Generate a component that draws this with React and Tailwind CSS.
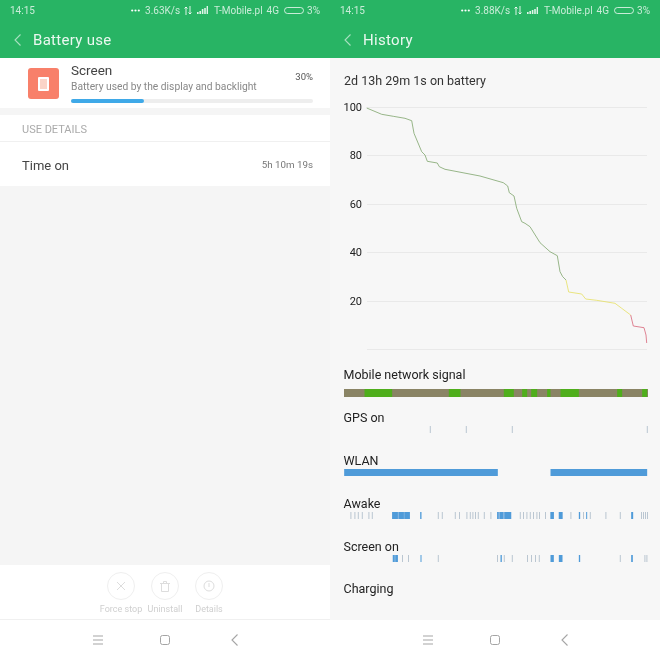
import React from "react";

const curveGreen = "366.7,108 381.7,114.3 393.3,116.3 405,118.3 411.7,120.7 414,133.3 421.7,151.7 425,155 427.3,161.3 437.3,163 439.3,166.7 445,169.3 480,176 503.3,182.7 507.7,186 509.3,192.7 514,196 516.7,208.3 521.7,221.7 525,223.3 530,226.7 540,242.7 550,251.7 557.3,255.7 560,271.7 562.7,276.7 566,280";
const curveYellow = "566,280 568.7,292 581.7,294 585.7,299 596.7,300.3 615,303.3 621.7,308.3 630.7,315";
const curveRed = "630.7,315 633.3,326 644,327.7 646,335 646.7,343";

// x values below are read off the 3x crops, 0-960 across x=340..660
const signalGreen = [[72, 155], [325, 360], [490, 520], [545, 560], [572, 590], [620, 630], [660, 715], [830, 845], [905, 920]];
const gps = [268, 376, 514, 919];
const wlan = [[11, 472], [630, 920]];
const awakeFaint = [30, 42, 52, 64, 84, 94, 292, 304, 343, 356, 378, 388, 396, 404, 412, 430, 450, 538, 548, 558, 568, 578, 588, 596, 614, 690, 728, 748, 795, 838, 902, 908, 914, 920];
const awakeWash = [[155, 208], [470, 512], [630, 640], [655, 666]];
const awakeSolid = [[155, 172], [175, 190], [192, 208], [239, 243], [470, 474], [478, 488], [492, 512], [630, 640], [655, 666], [715, 719], [737, 740], [872, 878]];
const screenFaint = [185, 203, 292, 470, 490, 514, 560, 572, 584, 595, 838, 912, 918];
const screenWash = [[157, 172]];
const screenSolid = [[157, 162], [165, 172], [240, 243], [480, 484], [630, 640], [655, 666], [715, 719], [872, 877]];

function Chevron({ className }) {
  return (
    <svg width="7" height="12" viewBox="0 0 7 12" fill="none" className={className}>
      <path d="M6.500 0.500 L1 6 L6.500 11.500" stroke="currentColor" strokeWidth="1.100" />
    </svg>
  );
}

function StatusBar({ speed, bars }) {
  return (
    <div className="h-5 flex items-center justify-between pl-[10px] pr-[10px] text-[10px] text-white/75">
      <span>14:15</span>
      <div className="flex items-center">
        <svg width="9" height="3" viewBox="0 0 9 3" className="mr-[5px]">
          <circle cx="1.2" cy="1.5" r="1.1" fill="#fff" />
          <circle cx="4.5" cy="1.5" r="1.1" fill="#fff" />
          <circle cx="7.8" cy="1.5" r="1.1" fill="#fff" />
        </svg>
        <span className="mr-[4px]">{speed}</span>
        <svg width="8" height="9" viewBox="0 0 8 9" fill="none" stroke="#fff" strokeOpacity="0.85" className="mr-[5px]">
          <path d="M2 9V1M0.5 2.5 2 1 3.500 2.500M6 0V8M4.500 6.500 6 8 7.500 6.500" />
        </svg>
        <svg width="11" height="8" viewBox="0 0 11 8" className="mr-[6px]">
          {bars.map((h, i) => (
            <rect key={i} x={i * 2.4} y={8 - h} width="1.6" height={h} fill="#fff" fillOpacity="0.85" />
          ))}
        </svg>
        <span className="mr-[4px]">T-Mobile.pl</span>
        <span className="mr-[5px]">4G</span>
        <div className="w-[20px] h-[7px] rounded-full border border-white/75 mr-[3px]" />
        <span>3%</span>
      </div>
    </div>
  );
}

function Header({ title, speed, bars }) {
  return (
    <div className="h-[58px] bg-[#28b464] text-white shrink-0">
      <StatusBar speed={speed} bars={bars} />
      <div className="h-[38px] flex items-center pl-[14px] pt-[1px]">
        <Chevron className="text-white/60 mr-[12px]" />
        <span className="text-[15px] tracking-[0.3px] text-white/90 mt-[1px]">{title}</span>
      </div>
    </div>
  );
}

function NavBar() {
  return (
    <div className="h-[40px] bg-white flex items-center justify-between pl-[93px] pr-[92px] shrink-0 text-[#a5a5a5]">
      <svg width="10" height="10" viewBox="0 0 10 10" stroke="currentColor" strokeWidth="1">
        <path d="M0 1H10M0 5H10M0 9H10" />
      </svg>
      <div className="w-[10px] h-[10px] -ml-[4px] rounded-[2.500px] border border-current" />
      <Chevron className="" />
    </div>
  );
}

function ActionButton({ label, children }) {
  return (
    <div className="flex flex-col items-center w-[44px]">
      <div className="w-[28px] h-[28px] rounded-full border border-[#efefef] flex items-center justify-center">
        {children}
      </div>
      <span className="text-[9px] leading-[12px] mt-[3px] text-[#cfcfcf] whitespace-nowrap">{label}</span>
    </div>
  );
}

function BatteryUse() {
  return (
    <div className="w-[330px] h-[660px] flex flex-col bg-[#f5f5f5]">
      <Header title="Battery use" speed="3.63K/s" bars={[2, 3, 5, 6, 8]} />
      <div className="h-[50px] bg-white flex pl-[28px] pr-[17px] pt-[10px] shrink-0">
        <div className="w-[31px] h-[31px] rounded-[3px] bg-[#f8806a] flex items-center justify-center shrink-0">
          <div className="w-[11px] h-[14px] rounded-[1px] border-2 border-white bg-[#fbd4c8]" />
        </div>
        <div className="ml-[12px] flex-1 -mt-[6px]">
          <div className="flex justify-between">
            <div>
              <div className="text-[13.500px] leading-[16px] text-[#444]">Screen</div>
              <div className="text-[10.250px] leading-[14px] mt-[2px] text-[#888]">Battery used by the display and backlight</div>
            </div>
            <span className="text-[9.500px] text-[#555] mt-[9px] leading-[12px]">30%</span>
          </div>
          <div className="h-[3.500px] mt-[5px] rounded-full bg-[#eeeeee]">
            <div className="w-[30%] h-full rounded-full bg-[#3fa9e8]" />
          </div>
        </div>
      </div>
      <div className="mt-[7px] h-[71px] bg-white shrink-0">
        <div className="h-[27px] pl-[22px] pt-[7px] text-[11px] leading-[16px] text-[#aaaaaa] border-b border-[#f0f0f0]">USE DETAILS</div>
        <div className="h-[44px] pl-[22px] pr-[17px] pt-[3px] flex items-center justify-between">
          <span className="text-[13px] text-[#444]">Time on</span>
          <span className="text-[9.750px] text-[#777]">5h 10m 19s</span>
        </div>
      </div>
      <div className="flex-1" />
      <div className="h-[55px] bg-white border-b border-[#f0f0f0] flex justify-center gap-0 pt-[7px] shrink-0">
        <ActionButton label="Force stop">
          <svg width="10" height="10" viewBox="0 0 10 10" stroke="#dddddd" strokeWidth="1">
            <path d="M1 1L9 9M9 1L1 9" />
          </svg>
        </ActionButton>
        <ActionButton label="Uninstall">
          <svg width="10" height="11" viewBox="0 0 10 11" fill="none" stroke="#dddddd" strokeWidth="1">
            <path d="M0 2.500H10M1.500 2.500V10.500H8.500V2.500M3.500 2.500V0.500H6.500V2.500" />
          </svg>
        </ActionButton>
        <ActionButton label="Details">
          <svg width="12" height="12" viewBox="0 0 12 12" fill="none" stroke="#dddddd" strokeWidth="1">
            <circle cx="6" cy="6" r="5" />
            <path d="M6 3V7" />
          </svg>
        </ActionButton>
      </div>
      <NavBar />
    </div>
  );
}

function Ticks({ faint = [], wash = [], solid = [], height = 7 }) {
  return (
    <svg width="304" height={height} viewBox={`10.500 0 912 ${height}`} preserveAspectRatio="none" className="block">
      {faint.map((x) => (
        <rect key={x} x={x} y="0" width="2.500" height={height} fill="#aebcc9" />
      ))}
      {wash.map(([a, b]) => (
        <rect key={a} x={a} y="0" width={b - a} height={height} fill="#8dbae2" />
      ))}
      {solid.map(([a, b]) => (
        <rect key={a} x={a} y="0" width={b - a} height={height} fill="#4f9bd9" />
      ))}
    </svg>
  );
}

function Chart() {
  const labels = [100, 80, 60, 40, 20, ""];
  return (
    <div className="relative mt-[17px] ml-[13px] h-[250px]">
      <div className="flex flex-col">
        {labels.map((l, i) => (
          <div key={i} className="h-[48.400px] flex items-start">
            <span className="w-[19px] -mt-[7px] text-[11px] leading-[16px] text-[#222] text-right">{l}</span>
            <div className="ml-[5px] flex-1 mr-[13px] border-t border-[#e9e9e9]" />
          </div>
        ))}
      </div>
      <svg width="330" height="300" viewBox="330 100 330 300" fill="none" strokeWidth="0.800" className="absolute -left-[13px] -top-[7.500px]">
        <polyline points={curveGreen} stroke="#7fa56c" />
        <polyline points={curveYellow} stroke="#e6df62" />
        <polyline points={curveRed} stroke="#d8667a" />
      </svg>
    </div>
  );
}

function History() {
  return (
    <div className="w-[330px] h-[660px] flex flex-col bg-[#f7f7f7]">
      <Header title="History" speed="3.88K/s" bars={[2, 3, 4, 5, 7]} />
      <div className="flex-1 overflow-hidden">
        <div className="pl-[14px] mt-[14px] text-[12.500px] leading-[18px] text-[#333]">2d 13h 29m 1s on battery</div>
        <Chart />
        <div className="pl-[13.500px] mt-[10px] text-[12.500px] leading-[16px] text-[#222]">
          <div>Mobile network signal</div>
          <div className="relative mt-[6px] mb-[13px] w-[304px] h-[7.500px] bg-[#8a8465]">
            <svg width="304" height="8" viewBox="10.500 0 912 8" preserveAspectRatio="none" className="block">
              {signalGreen.map(([a, b]) => (
                <rect key={a} x={a} y="0" width={b - a} height="8" fill="#4fae1c" />
              ))}
            </svg>
          </div>
          <div>GPS on</div>
          <div className="mb-[20px]">
            <Ticks faint={gps} />
          </div>
          <div>WLAN</div>
          <div className="mb-[20px]">
            <Ticks solid={wlan} />
          </div>
          <div>Awake</div>
          <div className="mb-[20px]">
            <Ticks faint={awakeFaint} wash={awakeWash} solid={awakeSolid} />
          </div>
          <div>Screen on</div>
          <div className="mb-[19px]">
            <Ticks faint={screenFaint} wash={screenWash} solid={screenSolid} />
          </div>
          <div>Charging</div>
        </div>
      </div>
      <NavBar />
    </div>
  );
}

export default function App() {
  return (
    <div className="w-[660px] h-[660px] flex overflow-hidden blur-[0.3px]" style={{ fontFamily: "Roboto, 'Noto Sans', sans-serif" }}>
      <BatteryUse />
      <History />
    </div>
  );
}
